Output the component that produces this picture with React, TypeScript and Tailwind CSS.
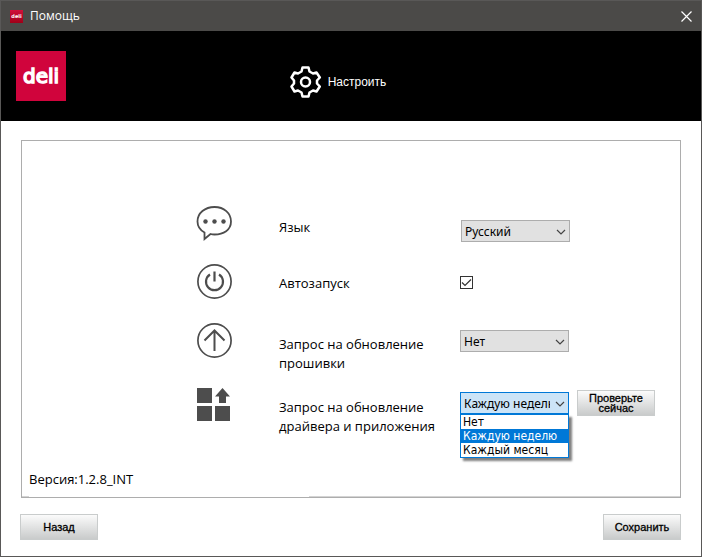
import { useState } from "react";
import type { ReactNode } from "react";

const languages = ["Русский", "English"];
const periods = ["Нет", "Каждую неделю", "Каждый месяц"];

type SelectProps = {
  id: string;
  options: string[];
  value: string;
  onChange: (value: string) => void;
  open?: boolean;
};

const Select = ({ id, options, value, onChange, open }: SelectProps) => {
  return (
    <div className="relative w-[109px]">
      <select
        id={id}
        value={value}
        onChange={(e) => onChange(e.target.value)}
        className={`block h-[22px] w-full appearance-none border pt-px pl-[3px] pr-[18px] font-['Noto_Sans',sans-serif] text-xs text-black outline-none ${
          open ? "border-[#0078d7] bg-[#cce4f7]" : "border-[#adadad] bg-[#e1e1e1]"
        }`}
      >
        {options.map((option) => (
          <option key={option}>{option}</option>
        ))}
      </select>
      <svg
        viewBox="0 0 10 6"
        className="pointer-events-none absolute top-[9px] right-1 h-[6px] w-[10px]"
        fill="none"
        stroke="#444"
        strokeWidth="1.200"
      >
        <path d="M1 1l4 4 4-4" />
      </svg>
      {open && (
        <ul
          role="listbox"
          className="absolute top-full left-0 w-full border border-[#0078d7] bg-white font-['DejaVu_Sans_Condensed','DejaVu_Sans',sans-serif] text-xs leading-[14px] text-black shadow-[3px_3px_2px_rgba(0,0,0,0.5)]"
        >
          {options.map((option) => (
            <li
              key={option}
              role="option"
              aria-selected={option === value}
              onClick={() => onChange(option)}
              className={`pl-[2px] whitespace-nowrap ${
                option === value ? "bg-[#0078d7] text-white" : ""
              }`}
            >
              {option}
            </li>
          ))}
        </ul>
      )}
    </div>
  );
};

const Button = ({ children }: { children: ReactNode }) => (
  <button
    type="button"
    className="h-[26px] w-[78px] border border-[#c9cccc] bg-linear-to-b from-[#fbfbfb] to-[#c9cbcb] px-2 font-['Liberation_Sans',Arial,sans-serif] text-[11px] leading-[10px] text-black [-webkit-text-stroke:0.3px_black]"
  >
    {children}
  </button>
);

const ChatIcon = () => (
  <svg viewBox="0 0 36 36" className="size-9" fill="none" stroke="#4d4d4d" strokeWidth="1.800">
    <path d="M8.500 27.500C4 25 1.500 21 1.500 16.500C1.500 8 9 2 18.500 2S35 8 35 16.500S27.500 29.500 18.500 29.500C17 29.500 15.500 29.300 14.500 29L8.500 34Z" />
    <g fill="#4d4d4d" stroke="none">
      <circle cx="9.500" cy="16.500" r="2.200" />
      <circle cx="18.500" cy="16.500" r="2.200" />
      <circle cx="27.500" cy="16.500" r="2.200" />
    </g>
  </svg>
);

const PowerIcon = () => (
  <svg viewBox="0 0 36 36" className="size-9" fill="none" stroke="#4d4d4d" strokeWidth="1.700">
    <circle cx="18.500" cy="17.500" r="16.600" />
    <path d="M14 10.500a8.500 8.500 0 1 0 9 0M18.500 7.500v10" strokeWidth="2.200" />
  </svg>
);

const UpIcon = () => (
  <svg viewBox="0 0 36 36" className="size-9" fill="none" stroke="#4d4d4d" strokeWidth="1.700">
    <circle cx="18.500" cy="17.500" r="16.600" />
    <path d="M18.500 28V7.500M8.500 17.500L18.500 7.500L28.500 17.500" strokeWidth="2" />
  </svg>
);

const AppsIcon = () => (
  <svg viewBox="0 0 36 36" className="size-9" fill="#4d4d4d">
    <path d="M1 1h15v15H1zM1 19h15v15H1zM19 19h15v15H19zM26.500 1L34 9.500H30V16H23V9.500H19Z" />
  </svg>
);

const GearIcon = () => (
  <svg
    viewBox="0 0 32 32"
    className="size-8"
    fill="none"
    stroke="white"
    strokeWidth="2.500"
    strokeLinejoin="round"
  >
    <path d="M12.500 1.500H18.500L19.500 5.500L23 7.500L26.500 6.500L29.800 11.500L27 14.500V17.500L29.800 20.500L26.500 25.500L23 24.500L19.500 26.500L18.500 30.500H12.500L11.500 26.500L8 24.500L4.500 25.500L1.500 20.500L4 17.500V14.500L1.500 11.500L4.500 6.500L8 7.500L11.500 5.500Z" />
    <circle cx="15.500" cy="16" r="4.500" />
  </svg>
);

const App = () => {
  const [language, setLanguage] = useState("Русский");
  const [autorun, setAutorun] = useState(true);
  const [firmware, setFirmware] = useState("Нет");
  const [driver, setDriver] = useState("Каждую неделю");

  return (
    <div className="flex min-h-screen flex-col border border-[#595857] bg-white font-['Open_Sans',sans-serif] text-[13px] leading-[19px] text-black">
      {/* title bar */}
      <div className="flex h-[30px] items-center bg-[#4b4a48] pr-2 pl-[9px] text-white">
        <span className="flex h-[13px] w-[13px] items-center justify-center bg-linear-to-b from-[#d0103a] to-[#a00018] font-['DejaVu_Sans',sans-serif] text-[5px] font-bold">
          deli
        </span>
        <h1 className="ml-[7px] text-xs">Помощь</h1>
        <button type="button" aria-label="Закрыть" className="ml-auto p-px">
          <svg viewBox="0 0 11 11" className="size-[11px]" stroke="white" strokeWidth="1.200">
            <path d="M.5.5l10 10M10.500.5l-10 10" />
          </svg>
        </button>
      </div>

      {/* header */}
      <header className="grid h-[90px] grid-cols-[1fr_auto_1fr] items-center bg-black px-[15px] text-white">
        <span className="flex size-[50px] items-center justify-center bg-[#d0043c] font-['DejaVu_Sans',sans-serif] text-[20px] [-webkit-text-stroke:1.5px_white]">
          deli
        </span>
        <div className="mt-3 mr-[26px] flex items-center gap-[6px] font-['Liberation_Sans',Arial,sans-serif] text-xs">
          <GearIcon />
          <h2>Настроить</h2>
        </div>
      </header>

      {/* settings */}
      <main className="mx-5 mt-[19px] flex flex-1 flex-col border border-[#adadad]">
        <div className="mt-16 grid flex-1 grid-cols-[83px_181px_1fr] grid-rows-[59px_59px_64px_auto] items-start pl-[174px]">
          <ChatIcon />
          <label htmlFor="language" className="mt-[13px]">
            Язык
          </label>
          <div className="mt-[15px] ml-px">
            <Select id="language" options={languages} value={language} onChange={setLanguage} />
          </div>

          <PowerIcon />
          <label htmlFor="autorun" className="mt-[10px]">
            Автозапуск
          </label>
          <div className="relative mt-3 size-[13px]">
            <input
              id="autorun"
              type="checkbox"
              checked={autorun}
              onChange={(e) => setAutorun(e.target.checked)}
              className="block size-[13px] appearance-none border border-[#333] bg-white"
            />
            {autorun && (
              <svg
                viewBox="0 0 13 13"
                className="pointer-events-none absolute inset-0"
                fill="none"
                stroke="#333"
                strokeWidth="1.200"
              >
                <path d="M2 6.500L5 9.500L11 3.500" />
              </svg>
            )}
          </div>

          <UpIcon />
          <label htmlFor="firmware" className="mt-3">
            Запрос на обновление
            <br />
            прошивки
          </label>
          <div className="mt-[7px]">
            <Select id="firmware" options={periods} value={firmware} onChange={setFirmware} />
          </div>

          <AppsIcon />
          <label htmlFor="driver" className="mt-[11px]">
            Запрос на обновление
            <br />
            драйвера и приложения
          </label>
          <div className="mt-[3px] flex items-start gap-2">
            <div className="pt-[2px]">
              <Select id="driver" options={periods} value={driver} onChange={setDriver} open />
            </div>
            <Button>Проверьте сейчас</Button>
          </div>
        </div>
        <p className="mb-[7px] ml-[7px]">Версия:1.2.8_INT</p>
        <div className="flex h-px justify-between">
          <span className="w-[7px] bg-[#d4d4d4]" />
          <span className="ml-[280px] flex-1 bg-[#d4d4d4]" />
        </div>
      </main>

      <footer className="mr-5 ml-[19px] mt-4 mb-4 flex justify-between">
        <Button>Назад</Button>
        <Button>Сохранить</Button>
      </footer>
    </div>
  );
};

export default App;
